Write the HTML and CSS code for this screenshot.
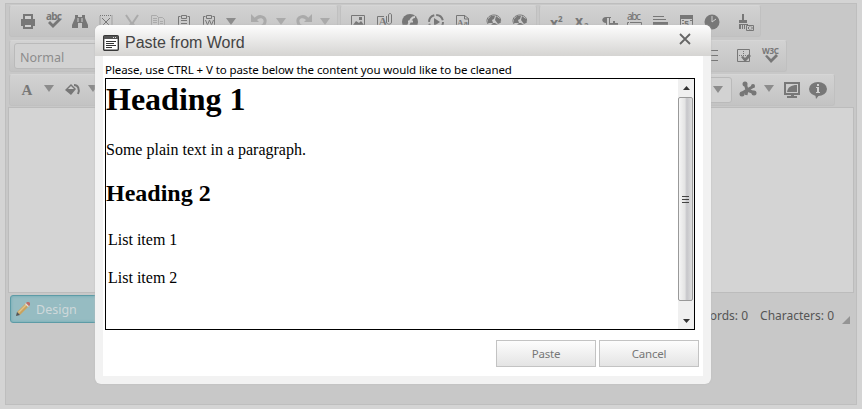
FILE: index.html
```html
<!DOCTYPE html>
<html lang="en">
<head>
<meta charset="utf-8">
<title>Paste from Word</title>
<link rel="stylesheet" href="styles.css">
</head>
<body>
<div class="editor">
  <div class="bar first">
    <div class="group g1">
      <svg class="ic" viewBox="0 0 26 30"><path d="M8 8h10v5H8zM6 13h14v7h-2v-3H8v3H6z"/><path class="hole" d="M10 10h6v3h-6z"/><path d="M8 17h10v6H8z"/><path class="hole" d="M10 19h6v2h-6z"/></svg>
      <svg class="ic" viewBox="0 0 26 30"><text x="5" y="14" font-size="10" textLength="16">abc</text><path d="M7 17l2-2 3 3 6-6 2 2-8 8z"/></svg>
      <svg class="ic" viewBox="0 0 26 30"><path d="M8 9h3v2h4V9h3v3l3 7v3h-6v-5h-4v5H5v-3l3-7z"/><path class="cut" d="M11 12v4M15 12v4"/></svg>
      <svg class="ic" viewBox="0 0 26 30"><path class="ln dash" d="M7 9.500h12v12H7z"/><path class="ln" d="M9 12l8 8M17 12l-8 8"/></svg>
      <svg class="ic light" viewBox="0 0 26 30"><path class="l2" d="M7 9l6 9 6-9M13 16l-3 5M13 16l3 5"/></svg>
      <svg class="ic light" viewBox="0 0 26 30"><path class="ln" d="M6.500 9.500h5l2 2v8h-7zM13.500 11.500h4l2 2v8h-6zM8 12.500h4M8 14.500h4M8 16.500h4M15 15.500h3M15 17.500h3"/></svg>
      <svg class="ic" viewBox="0 0 26 30"><path class="ln" d="M9.500 10.500h-2v11h11v-11h-2M10.500 9.500h5v3h-5zM10 14.500h6M10 17.500h6"/></svg>
      <svg class="ic" viewBox="0 0 26 30"><path class="ln" d="M8.500 10.500h-2v11h11v-11h-2M9.500 9.500h5v3h-5zM8.500 14l2 5 2-5 2 5 2-5"/></svg>
      <svg class="ar" viewBox="0 0 18 30"><path d="M4 12h10l-5 7z"/></svg>
      <svg class="ic undo light" viewBox="0 0 26 30"><path d="M5 8v8h8l-3-3z"/><path class="l3" d="M9 14c4-6 11-3 10 2-.5 3-3 5-7 5"/></svg>
      <svg class="ar light" viewBox="0 0 18 30"><path d="M4 12h10l-5 7z"/></svg>
      <svg class="ic light" viewBox="0 0 26 30"><path d="M21 8v8h-8l3-3z"/><path class="l3" d="M17 14c-4-6-11-3-10 2 .5 3 3 5 7 5"/></svg>
      <svg class="ar light" viewBox="0 0 18 30"><path d="M4 12h10l-5 7z"/></svg>
    </div>
    <div class="group g2">
      <svg class="ic" viewBox="0 0 26 30"><path class="ln" d="M6.500 9.500h13v11h-13z"/><path d="M8 19l3-4 3 2 2-2 3 4zM14 11h3v3h-3z"/></svg>
      <svg class="ic" viewBox="0 0 26 30"><path class="ln" d="M13 10.500H6.500v12h12V19M15.500 10v6c0 3 5 3 5 0V9c0-2-3-2-3 0v7"/><text class="serif" x="7.500" y="20" font-size="12">A</text></svg>
      <svg class="ic" viewBox="0 0 26 30"><circle cx="13" cy="16" r="8"/><path class="cut2" d="M18 11c-5 0-5 6-8 11M11 15.500h5"/></svg>
      <svg class="ic" viewBox="0 0 26 30"><circle class="l2 ring" cx="13" cy="16" r="7"/><path d="M11 12l6 4-6 4z"/></svg>
      <svg class="ic" viewBox="0 0 26 30"><path class="ln" d="M7.500 9.500h8l4 3v9h-12zM15.500 9v4h4"/><text class="serif" x="8" y="20" font-size="9">Aa</text></svg>
      <svg class="ic globe" viewBox="0 0 26 30"><path class="ln" d="M7 18c-3-5 1-9 6-9s8 4 6 8"/><path d="M7 13l3-3h4l-1 3-2 1 1 3H7zM15 10l4 3v4l-2 1-3-4zM5 19h5l2-2h2l3 2h3v3H5z"/></svg>
      <svg class="ic" viewBox="0 0 26 30"><path class="ln" d="M7 18c-3-5 1-9 6-9s8 4 6 8"/><path d="M7 13l3-3h4l-1 3-2 1 1 3H7zM15 10l4 3v4l-2 1-3-4zM5 19h5l2-2h2l3 2h3v3H5z"/></svg>
    </div>
    <div class="group g3">
      <svg class="ic" viewBox="0 0 26 30"><text x="6" y="22" font-size="14">x</text><text x="14" y="16" font-size="8">2</text></svg>
      <svg class="ic" viewBox="0 0 26 30"><text x="5" y="20" font-size="14">x</text><text x="14" y="23" font-size="8">2</text></svg>
      <svg class="ic" viewBox="0 0 26 30"><path d="M15 11h-5c-5 0-5 6 0 6v5h1V12h2v10h1V12h1zM14 17h3v-2h2v2h3v2h-3v3h-2v-3h-3z"/></svg>
      <svg class="ic" viewBox="0 0 26 30"><text class="plain" x="5" y="14" font-size="10" textLength="14">abc</text><path class="ln" d="M7 16.500H5.500v6M18 16.500h1.500v6M8 16.500h10M8 19.500h7"/></svg>
      <svg class="ic" viewBox="0 0 26 30"><path d="M5 10h11v1H5zM5 13h13v1H5zM5 16h15v3H5z"/></svg>
      <svg class="ic" viewBox="0 0 26 30"><path class="ln" d="M6.500 10.500h12v12h-12z"/><path d="M6 9h13v4H6zM8 14h2v1H8zM8 17h2v1H8zM16 14h2v1h-2z"/><text x="10" y="21" font-size="9">5</text></svg>
      <svg class="ic clock" viewBox="0 0 26 30"><circle cx="13" cy="16" r="7.500"/><path class="cut" d="M13 10v6l4-3"/></svg>
      <svg class="ic brush" viewBox="0 0 26 30"><path d="M11 8h2v6h3v3H8v-3h3zM8 18h9v1H8zM8 19h2v4H8zM11 19h1v4h-1zM13 19h1v4h-1z"/><path class="ln" d="M15.500 19.500h7v5h-7z"/><path class="ln" d="M18.500 20.500L17 22l1.500 1.500M20 20.500l1.500 1.500-1.500 1.500"/></svg>
    </div>
  </div>
  <div class="bar">
    <div class="group wide">
      <span class="select">Normal</span>
      <span class="grow"></span>
      <svg class="ic lines" viewBox="0 0 26 30"><path d="M8 9h11v1H8zM8 14h11v1H8zM8 19h11v1H8z"/></svg>
      <svg class="ic" viewBox="0 0 26 30"><path class="ln" d="M6.500 8.500h12v12h-12z"/><path class="ln dash" d="M12.500 10v10M8 14.500h9"/><path d="M10 16l2-1 2 2 4-4 2 2-6 6z"/></svg>
      <svg class="ic w3" viewBox="0 0 26 30"><text x="5" y="13" font-size="8" textLength="17">W3C</text><path d="M8 15l2-1 4 4 5-5 2 2-7 7z"/></svg>
    </div>
  </div>
  <div class="bar">
    <div class="group full">
      <svg class="ic" viewBox="0 0 26 30"><text class="serif" x="7.500" y="20" font-size="15">A</text></svg>
      <svg class="ar" viewBox="0 0 18 30"><path d="M4 10h10l-5 7z"/></svg>
      <svg class="ic" viewBox="0 0 26 30"><path d="M6 15l6-6 5 5-5 6z"/><path class="hole" d="M9 14l3-3 3 3z"/><path class="l2" d="M15 10c4 0 6 4 4 9"/></svg>
      <svg class="ar" viewBox="0 0 18 30"><path d="M4 10h10l-5 7z"/></svg>
      <span class="select combo"><svg class="ar" viewBox="0 0 18 25"><path d="M4 8h10l-5 7z"/></svg></span>
      <svg class="ic" viewBox="0 0 26 30"><path class="l3" d="M10 8l2 7M19 11l-7 4M6 19l6-4M12 15l8 3M12 15l-1 5"/><circle cx="10" cy="9" r="2.500"/><circle cx="18" cy="11" r="2"/><circle cx="7" cy="19" r="2.500"/><circle cx="19" cy="18" r="2.500"/></svg>
      <svg class="ar" viewBox="0 0 18 30"><path d="M3 10h10l-5 7z"/></svg>
      <svg class="ic" viewBox="0 0 26 30"><path class="l2" d="M6 8h14v11H6z"/><path d="M8 17c1-5 4-7 10-7v7zM12 19h3v2h3v2H8v-2h4z"/></svg>
      <svg class="ic" viewBox="0 0 26 30"><ellipse cx="13" cy="14" rx="9" ry="7"/><path d="M10 18l1 6 4-5z"/><path class="hole" d="M12 9h2v2h-2zM11 12h3v5h1v1h-4v-1h1v-4h-1z"/></svg>
    </div>
  </div>
  <div class="canvas"></div>
  <div class="status">
    <div class="design">
      <svg width="16" height="16" viewBox="0 0 16 16"><path fill="#c9a35e" d="M2 11L11 2l3 3-9 9z"/><path fill="#e0c38c" d="M3 11l8-8 1 1-8 8z"/><path fill="#555" d="M1 15l1-4 3 3z"/><path fill="#ddd" d="M10 3l1-1 3 3-1 1z"/><path fill="#bd6d6a" d="M11 2l1-1h2l1 1v2l-1 1z"/></svg>
      <span>Design</span>
    </div>
    <div class="count"><span>Words: 0</span><span class="chars">Characters: 0</span>
      <svg width="8" height="8" viewBox="0 0 8 8"><path d="M8 0v8H0z" fill="#949494"/></svg>
    </div>
  </div>
</div>

<div class="dialog">
  <div class="title">
    <svg width="16" height="16" viewBox="0 0 16 16"><rect x=".7" y=".7" width="14.600" height="14.600" rx="1" fill="#fff" stroke="#383838" stroke-width="1.400"/><path fill="#555" d="M1 1h14v3H1z"/><path fill="#ddd" d="M10 2h1v1h-1zM12 2h1v1h-1z"/><path stroke="#333" d="M3 6.500h10M3 8.500h8M3 10.500h10M3 12.500h6"/></svg>
    <h4>Paste from Word</h4>
    <svg class="close" width="12" height="12" viewBox="0 0 12 12"><path d="M1 1l10 10M11 1L1 11" stroke="#666" stroke-width="1.800"/></svg>
  </div>
  <div class="content">
    <p class="hint">Please, use CTRL + V to paste below the content you would like to be cleaned</p>
    <div class="frame">
      <div class="doc">
        <h1>Heading 1</h1>
        <p>Some plain text in a paragraph.</p>
        <h2>Heading 2</h2>
        <p class="item">List item 1</p>
        <p class="item">List item 2</p>
      </div>
      <div class="scroll">
        <svg width="16" height="18" viewBox="0 0 16 18"><path d="M5 11l3.500-4 3.500 4z" fill="#333"/></svg>
        <div class="thumb"><i></i><i></i><i></i></div>
        <svg width="16" height="28" viewBox="0 0 16 28"><path d="M5 18h7l-3.500 4z" fill="#333"/></svg>
      </div>
    </div>
    <div class="buttons"><button>Paste</button><button>Cancel</button></div>
  </div>
</div>
</body>
</html>
```
FILE: styles.css
```css
* { box-sizing: border-box; }
body { margin: 0; width: 862px; height: 409px; overflow: hidden; background: #d4d4d4; padding: 3px 5px; font-family: "Noto Sans", sans-serif; }
svg { display: block; flex: none; }
h1, h2, h4, p { margin: 0; }

.editor { width: 852px; height: 402px; border: 1px solid #bebebe; background: #c8c8c8; padding: 1px 3px; }
.bar { display: flex; gap: 2px; height: 32px; margin-bottom: 2px; }
.bar.first { margin-bottom: 3px; }
.group { display: flex; align-items: center; height: 32px; border: 1px solid #c0c0c0; border-top-color: #d6d6d6; border-radius: 3px; background: linear-gradient(#d2d2d2, #c3c3c3); fill: #777; }
.g1 { width: 329px; padding-left: 5px; }
.g2 { width: 197px; padding-left: 4px; }
.g3 { width: 222px; padding-left: 4px; }
.wide { width: 778px; padding: 0 2px 0 4px; }
.full { width: 826px; padding-left: 4px; padding-right: 3px; }
.ic { width: 26px; height: 30px; }
.ar { width: 18px; height: 30px; fill: #8c8c8c; }
.g1 .ar { margin-left: -1px; margin-right: 1px; }
.undo { margin-left: 4px; width: 28px; }
.light, .ar.light { fill: #aaa; }
.globe, .brush { margin-left: 6px; }
.clock { margin-left: -1px; }
.lines { margin-right: 6px; }
.w3 { margin-right: 1px; }
.ln, .l2, .l3 { fill: none; stroke: #777; stroke-width: 1; }
.l2 { stroke-width: 2; }
.l3 { stroke-width: 3; }
.light .ln, .light .l2, .light .l3 { stroke: #aaa; }
.dash { stroke-dasharray: 1 1; }
.ring { stroke-dasharray: 9 2; }
.hole { fill: #d0d0d0; }
.cut, .cut2 { fill: none; stroke: #d0d0d0; stroke-width: 1; }
.cut2 { stroke-width: 2; }
.ic text { font-family: "Noto Sans", sans-serif; font-weight: 700; }
.ic text.plain { font-weight: 500; }
.ic text.serif { font-family: "Liberation Serif", serif; }
.select { width: 150px; height: 26px; border: 1px solid #bababa; border-radius: 3px; background: #d2d2d2; color: #8c8c8c; font-size: 12.500px; line-height: 27px; padding-left: 5px; }
.grow { flex: 1; }
.combo { width: 120px; display: flex; justify-content: flex-end; align-items: center; margin-left: auto; padding-right: 4px; margin-right: 3px; }
.combo .ar { height: 25px; }
.full .ic:nth-child(3) { margin-left: 1px; margin-right: -1px; }
.canvas { height: 186px; margin: -1px -1px 0; border: 1px solid #bcbcbc; background: #d4d4d4; }
.status { display: flex; justify-content: space-between; padding: 2px 3px 0 1px; }
.design { width: 100px; height: 28px; display: flex; align-items: center; gap: 5px; padding-left: 4px; border: 1px solid #5d9ba6; border-radius: 3px; background: #96bcc2; box-shadow: inset 0 0 3px #6aa9b3; color: #ced8da; font-size: 12.500px; }
.count { display: flex; align-items: center; height: 40px; font-size: 12px; color: #555; }
.chars { margin: 0 8px 0 12px; }
.count svg { margin-top: 9px; }

.dialog { position: absolute; left: 95px; top: 25px; width: 616px; height: 359px; border-radius: 6px; background: #f2f2f2; box-shadow: 0 0 2px #bbb; overflow: hidden; }
.title { height: 31px; display: flex; align-items: center; padding: 4px 20px 0 8px; background: linear-gradient(#fdfdfd, #d5d4d2); }
.title h4 { flex: 1; margin-left: 6px; font: 16px "Liberation Sans", sans-serif; color: #444; }
.title .close { margin-bottom: 8px; }
.content { margin: 0 8px; height: 320px; background: #fff; padding: 5px 4px 0 2px; }
.hint { font-size: 11.500px; letter-spacing: -0.080px; line-height: 17px; height: 17px; color: #000; white-space: nowrap; }
.frame { width: 590px; height: 252px; border: 1px solid #000; display: flex; justify-content: space-between; }
.doc { font: 16px/18px "Liberation Serif", serif; color: #000; }
.doc h1 { font-size: 32px; line-height: 37px; margin: 2px 0 23px; }
.doc h2 { font-size: 24px; line-height: 27px; margin: 21px 0 24px; }
.doc .item { margin: 0 0 20px 2px; }
.scroll { width: 16px; background: #f0f0f0; }
.thumb { width: 15px; height: 204px; border: 1px solid #999; border-radius: 2px; background: linear-gradient(90deg, #f5f5f5, #e4e4e4 45%, #c6c6ca 60%, #dedede); display: flex; flex-direction: column; gap: 2px; align-items: center; justify-content: center; }
.thumb i { width: 7px; height: 1px; background: #444; }
.buttons { display: flex; justify-content: flex-end; gap: 3px; margin-top: 10px; }
.buttons button { width: 100px; height: 27px; border: 1px solid #c3c3c3; padding: 0; background: linear-gradient(#fdfdfd, #e4e4e4); font: 11.500px "Noto Sans", sans-serif; letter-spacing: -0.200px; color: #777; }
```
